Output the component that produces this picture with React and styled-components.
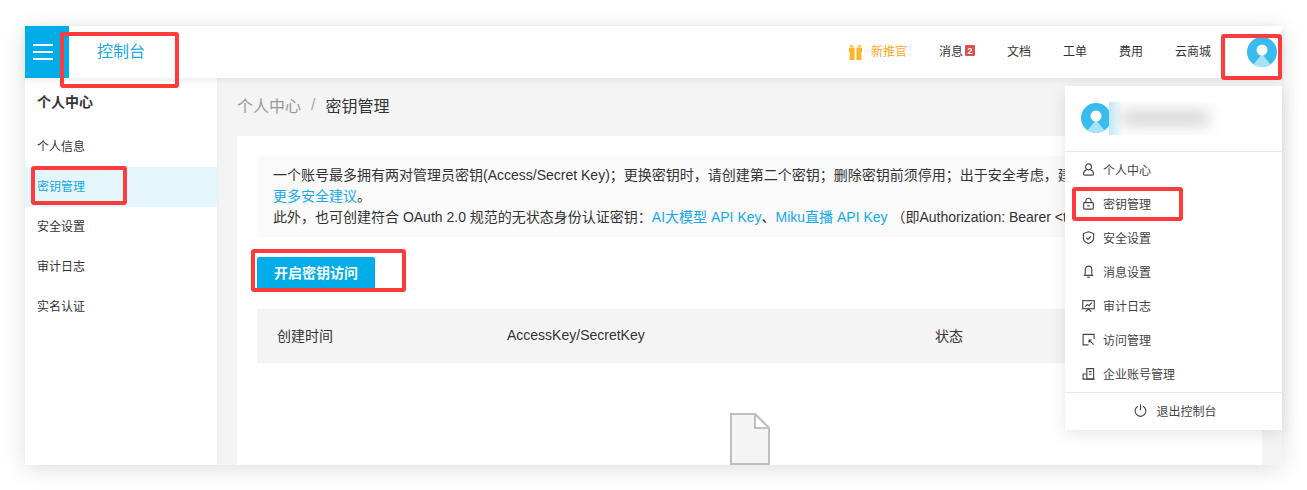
import React from 'react';
import styled, { createGlobalStyle } from 'styled-components';

const GlobalStyle = createGlobalStyle`
  html, body {
    margin: 0;
    background: #fff;
    font-family: "Liberation Sans", "Noto Sans CJK SC", sans-serif;
    color: #333;
  }
  * { box-sizing: border-box; }
`;

const sideItems = ['个人信息', '密钥管理', '安全设置', '审计日志', '实名认证'];

const icons = {
    user: <><circle cx="7" cy="4.200" r="3.200" /><path d="M4.800 7.200C2.800 8 1.600 9.500 1.600 11.500c0 1 .5 1.500 1.400 1.500h8c.9 0 1.400-.5 1.400-1.500 0-2-1.200-3.500-3.200-4.300" /></>,
    lock: <><path d="M4.200 6V4C4.200 2.400 5.400 1.300 7 1.300S9.800 2.400 9.800 4v2" /><rect x="1.800" y="6" width="10.400" height="7" rx="1" /><path d="M5.500 9.500h3" /></>,
    shield: <><path d="M7 .8l5.500 2v5.400c0 2.700-2.500 4.300-5.500 5.200-3-.9-5.500-2.500-5.500-5.200V2.800z" /><path d="M4.600 7.300l1.800 1.700 3-3.100" /></>,
    bell: <><path d="M2.800 11.200c.5-.6.700-1.400.7-2.600V5C3.500 2.800 5 1.200 7 1.200S10.500 2.800 10.500 5v3.600c0 1.200.2 2 .7 2.600z" /><path d="M5.500 13.200h3" /></>,
    audit: <><rect x=".8" y="1.800" width="12.400" height="8.700" /><path d="M3.500 8.200l2.300-2.300 1.700 1.300 3-3.200M4 13.500l3-3 3 3" /></>,
    access: <><path d="M13 6.500V1.500H1.200v11.300H7" /><path d="M7.500 7.500l5 5M7.500 7.500h3M7.500 7.500v3" /></>,
    company: <><path d="M5.200 13V1.800h7.300V13z" /><path d="M1.200 13V7.500h4M.5 13h13M7.500 5h2.800M7.500 7.800h2.800" /></>,
};

const menuItems = [
    ['user', '个人中心'],
    ['lock', '密钥管理'],
    ['shield', '安全设置'],
    ['bell', '消息设置'],
    ['audit', '审计日志'],
    ['access', '访问管理'],
    ['company', '企业账号管理'],
];

const marks = [
    { x: 60, y: 32, w: 119, h: 56 },
    { x: 31, y: 166, w: 96, h: 39 },
    { x: 251, y: 249, w: 155, h: 43 },
    { x: 1221, y: 34, w: 61, h: 46 },
    { x: 1072, y: 187, w: 111, h: 34 },
];

function Avatar() {
    return (
        <AvatarCircle viewBox="0 0 30 30">
            <circle cx="15" cy="15" r="15" fill="#38bbee" />
            <path d="M15 17L23.500 27.500A15 15 0 0 1 6.500 27.500z" fill="#a8e2f8" />
            <circle cx="15" cy="13" r="5.500" fill="#fff" />
        </AvatarCircle>
    );
}

export default function App() {
    return (
        <>
            <GlobalStyle />
            <Page>
                <Frame>
                    <Header>
                        <Burger><span /><span /><span /></Burger>
                        <Title>控制台</Title>
                        <Nav>
                            <Promo>
                                <svg width="13" height="16" viewBox="0 0 13 16" fill="#fdb62a">
                                    <path d="M0 3.500h5.600V16H.6V8H0zM7.400 3.500H13V8h-.6v8h-5z" />
                                    <path d="M1 .5L5.600 2.800H1zM12 .5L7.400 2.800H12z" />
                                </svg>
                                <PromoText>新推官</PromoText>
                            </Promo>
                            <NavItem>消息<Badge>2</Badge></NavItem>
                            <NavItem>文档</NavItem>
                            <NavItem>工单</NavItem>
                            <NavItem>费用</NavItem>
                            <NavItem>云商城</NavItem>
                            <AvatarSlot><Avatar /></AvatarSlot>
                        </Nav>
                    </Header>
                    <Body>
                        <Sidebar>
                            <SideTitle>个人中心</SideTitle>
                            {sideItems.map((item, i) => (
                                <SideItem key={item} $active={i === 1}>{item}</SideItem>
                            ))}
                        </Sidebar>
                        <Main>
                            <Breadcrumb>
                                <Crumb>个人中心</Crumb>
                                <Slash>/</Slash>
                                <span>密钥管理</span>
                            </Breadcrumb>
                            <Card>
                                <Notice>
                                    <div>一个账号最多拥有两对管理员密钥(Access/Secret Key)；更换密钥时，请创建第二个密钥；删除密钥前须停用；出于安全考虑，建</div>
                                    <div><NoticeLink>更多安全建议</NoticeLink>。</div>
                                    <div>此外，也可创建符合 OAuth 2.0 规范的无状态身份认证密钥：<NoticeLink>AI大模型 API Key</NoticeLink>、<NoticeLink>Miku直播 API Key</NoticeLink> （即Authorization: Bearer &lt;token&gt;）</div>
                                </Notice>
                                <PrimaryButton>开启密钥访问</PrimaryButton>
                                <TableHead>
                                    <span>创建时间</span>
                                    <span>AccessKey/SecretKey</span>
                                    <span>状态</span>
                                </TableHead>
                                <Empty>
                                    <svg width="40" height="52" viewBox="0 0 40 52">
                                        <path d="M1 1h24l14 14v36H1z" fill="#f4f4f4" stroke="#bfbfbf" strokeWidth="2" />
                                        <path d="M25 1v14h14z" fill="#fff" stroke="#bfbfbf" strokeWidth="2" />
                                    </svg>
                                </Empty>
                            </Card>
                        </Main>
                    </Body>
                    <Menu>
                        <MenuUser>
                            <Avatar />
                            <BlurredName><span /></BlurredName>
                        </MenuUser>
                        <MenuList>
                            {menuItems.map(([icon, label]) => (
                                <MenuItem key={label}>
                                    <MenuIcon viewBox="0 0 14 14">{icons[icon]}</MenuIcon>
                                    {label}
                                </MenuItem>
                            ))}
                        </MenuList>
                        <MenuFooter>
                            <MenuIcon viewBox="0 0 14 14">
                                <path d="M4.200 2.400a5.800 5.800 0 1 0 5.600 0" />
                                <path d="M7 .5v6.300" />
                            </MenuIcon>
                            退出控制台
                        </MenuFooter>
                    </Menu>
                </Frame>
                {marks.map((m) => (
                    <RedMark key={m.x} $x={m.x} $y={m.y} $w={m.w} $h={m.h} />
                ))}
            </Page>
        </>
    );
}

const Page = styled.div`
  position: relative;
  width: 1307px;
  height: 490px;
  padding: 26px 25px 25px;
  overflow: hidden;
`;

const Frame = styled.div`
  position: relative;
  display: flex;
  flex-direction: column;
  width: 1257px;
  height: 439px;
  background: #f4f4f4;
  box-shadow: 0 4px 22px rgba(0, 0, 0, 0.13);
`;

const Header = styled.header`
  position: relative;
  z-index: 2;
  display: flex;
  align-items: center;
  flex: none;
  height: 52px;
  background: #fff;
  box-shadow: 0 2px 8px rgba(0, 0, 0, 0.08);
`;

const Burger = styled.div`
  display: flex;
  flex-direction: column;
  justify-content: center;
  gap: 5px;
  width: 44px;
  height: 52px;
  padding-left: 8px;
  background: #00ade8;
  span {
    display: block;
    width: 20px;
    height: 2px;
    background: #fff;
  }
`;

const Title = styled.div`
  margin-left: 28px;
  padding-bottom: 4px;
  font-size: 16px;
  color: #14a9ea;
`;

const Nav = styled.nav`
  display: flex;
  align-items: center;
  gap: 32px;
  margin-left: auto;
  padding-right: 5px;
  font-size: 12px;
`;

const NavItem = styled.div`
  display: flex;
  align-items: center;
  gap: 2px;
  padding-bottom: 3px;
`;

const Promo = styled.div`
  display: flex;
  align-items: center;
  gap: 9px;
  color: #ffa726;
`;

const PromoText = styled.span`
  padding-bottom: 3px;
`;

const Badge = styled.span`
  display: flex;
  align-items: center;
  justify-content: center;
  width: 10px;
  height: 11px;
  border-radius: 1px;
  background: #df4f4f;
  color: #fff;
  font-size: 9px;
  font-weight: 700;
`;

const AvatarSlot = styled.div`
  display: flex;
  margin-left: 4px;
`;

const AvatarCircle = styled.svg`
  display: block;
  flex: none;
  width: 30px;
  height: 30px;
`;

const Body = styled.div`
  display: flex;
  flex: 1;
  min-height: 0;
`;

const Sidebar = styled.aside`
  flex: none;
  width: 192px;
  background: #fff;
  box-shadow: 1px 0 3px rgba(0, 0, 0, 0.04);
  font-size: 12px;
`;

const SideTitle = styled.div`
  height: 49px;
  padding: 15px 12px 0;
  font-size: 14px;
  line-height: 18px;
  font-weight: 700;
`;

const SideItem = styled.div`
  height: 40px;
  padding-left: 12px;
  line-height: 40px;
  color: ${(p) => (p.$active ? '#14a9ea' : '#333')};
  background: ${(p) => (p.$active ? '#e5f5fc' : 'transparent')};
`;

const Main = styled.main`
  flex: 1;
  min-width: 0;
  padding: 0 20px;
  overflow: hidden;
`;

const Breadcrumb = styled.div`
  display: flex;
  align-items: center;
  height: 58px;
  padding-bottom: 4px;
  font-size: 16px;
`;

const Crumb = styled.span`
  color: #999;
`;

const Slash = styled.span`
  margin: 0 10px;
  color: #aaa;
`;

const Card = styled.section`
  height: 329px;
  padding: 20px;
  background: #fff;
  overflow: hidden;
`;

const Notice = styled.div`
  height: 81px;
  padding: 9px 16px;
  background: #fafafa;
  font-size: 14px;
  line-height: 21px;
  white-space: nowrap;
  overflow: hidden;
`;

const NoticeLink = styled.a`
  color: #14a9ea;
`;

const PrimaryButton = styled.button`
  display: block;
  width: 118px;
  height: 31px;
  margin-top: 20px;
  padding: 0 0 2px;
  border: none;
  border-radius: 2px 2px 0 0;
  background: #00ade8;
  color: #fff;
  font-family: inherit;
  font-size: 14px;
  font-weight: 700;
`;

const TableHead = styled.div`
  display: grid;
  grid-template-columns: 230px 428px 1fr;
  align-items: center;
  height: 54px;
  margin-top: 21px;
  padding: 0 0 2px 20px;
  background: #f4f4f4;
  font-size: 14px;
`;

const Empty = styled.div`
  display: flex;
  justify-content: center;
  padding-top: 50px;
`;

const Menu = styled.div`
  position: absolute;
  z-index: 3;
  top: 60px;
  right: 0;
  display: flex;
  flex-direction: column;
  width: 217px;
  height: 344px;
  background: #fff;
  box-shadow: 0 4px 16px rgba(0, 0, 0, 0.1);
`;

const MenuUser = styled.div`
  display: flex;
  align-items: center;
  flex: none;
  height: 66px;
  padding: 0 0 1px 16px;
  border-bottom: 1px solid #e8e8e8;
`;

const BlurredName = styled.div`
  flex: none;
  width: 112px;
  height: 33px;
  margin-left: -2px;
  overflow: hidden;
  background: linear-gradient(90deg, #bfe8f8 0, #fff 14px);
  span {
    display: block;
    width: 88px;
    height: 14px;
    margin: 9px 0 0 12px;
    background: #cfcfcf;
    filter: blur(8px);
  }
`;

const MenuList = styled.div`
  flex: 1;
`;

const MenuItem = styled.div`
  display: flex;
  align-items: center;
  gap: 8px;
  height: 34px;
  padding-left: 17px;
  font-size: 12px;
  color: #444;
`;

const MenuIcon = styled.svg`
  flex: none;
  width: 13px;
  height: 13px;
  fill: none;
  stroke: #444;
  stroke-width: 1.2;
`;

const MenuFooter = styled.div`
  display: flex;
  align-items: center;
  justify-content: center;
  gap: 9px;
  flex: none;
  height: 38px;
  padding: 0 0 2px 4px;
  border-top: 1px solid #e8e8e8;
  font-size: 12px;
  color: #444;
`;

const RedMark = styled.div`
  position: absolute;
  z-index: 5;
  left: ${(p) => p.$x}px;
  top: ${(p) => p.$y}px;
  width: ${(p) => p.$w}px;
  height: ${(p) => p.$h}px;
  border: 4px solid #ff3b3b;
  border-radius: 3px;
`;
